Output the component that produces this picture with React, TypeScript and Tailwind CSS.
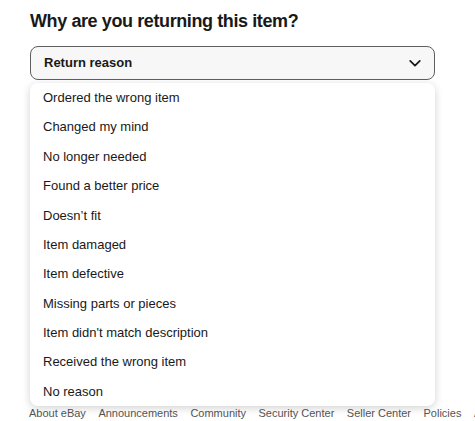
import React, { useState } from 'react'

const reasons = [
  'Ordered the wrong item',
  'Changed my mind',
  'No longer needed',
  'Found a better price',
  'Doesn’t fit',
  'Item damaged',
  'Item defective',
  'Missing parts or pieces',
  "Item didn't match description",
  'Received the wrong item',
  'No reason',
]

const footerLinks = ['About eBay', 'Announcements', 'Community', 'Security Center', 'Seller Center', 'Policies', 'Affiliates', 'Help & Contact']

function App() {
  const [open, setOpen] = useState(true)
  const [reason, setReason] = useState('Return reason')

  return (
    <div className="w-[475px] h-[421px] overflow-hidden bg-white font-['Liberation_Sans',Arial,sans-serif] text-[#191919]">
      <div className="pl-[30px] pr-[40px] pt-[10px]">
        <h1 className="text-[18px] leading-[22px] font-bold tracking-[-0.4px]">Why are you returning this item?</h1>

        {/* Select */}
        <div className="relative mt-[14px]">
          <button
            onClick={() => setOpen(!open)}
            className="w-full h-[34px] flex items-center justify-between pl-[13px] pr-[12px] bg-[#f7f7f7] border border-[#5f5f5f] rounded-[8px] text-[13px] font-bold"
          >
            <span>{reason}</span>
            <svg width="14" height="14" viewBox="0 0 16 16" fill="none">
              <path d="M2.5 5.5L8 11L13.5 5.5" stroke="#191919" strokeWidth="2" strokeLinecap="round" strokeLinejoin="round" />
            </svg>
          </button>

          {open && (
            <ul className="absolute z-10 left-0 right-0 top-[37px] bg-white rounded-[8px] shadow-[0_2px_8px_rgba(0,0,0,0.18)]">
              {reasons.map((r, i) => (
                <li
                  key={i}
                  onClick={() => { setReason(r); setOpen(false) }}
                  className="h-[29.4px] flex items-center pl-[13px] text-[13px] cursor-pointer"
                >
                  {r}
                </li>
              ))}
            </ul>
          )}
        </div>
      </div>

      {/* Footer */}
      <footer className="mt-[326px] pl-[29px] flex gap-[12.5px] whitespace-nowrap text-[11px] leading-[14px] text-[#555]">
        {footerLinks.map((l, i) => (
          <span key={i}>{l}</span>
        ))}
      </footer>
    </div>
  )
}

export default App
